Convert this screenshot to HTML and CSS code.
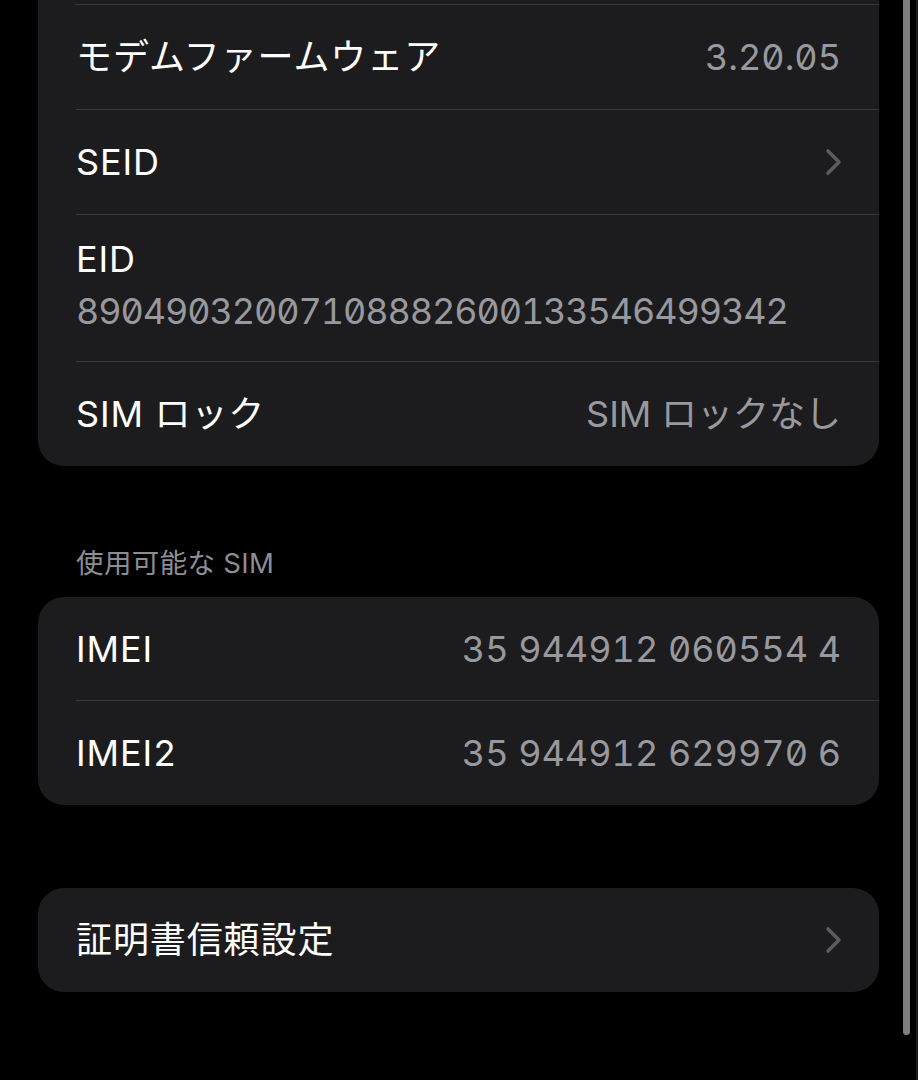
FILE: index.html
```html
<!DOCTYPE html>
<html lang="ja">
<head>
<meta charset="utf-8">
<link rel="stylesheet" href="styles.css">
</head>
<body>
<div class="screen">
  <div class="list">
    <div class="card card-top">
      <div class="stub"></div>
      <div class="row">
        <span class="label">モデムファームウェア</span>
        <span class="value">3.20.05</span>
      </div>
      <div class="row">
        <span class="label">SEID</span>
        <svg class="chev" viewBox="0 0 18 28" width="18" height="28"><path d="M3 3 L14 14 L3 25" fill="none" stroke="#5b5b60" stroke-width="3.6" stroke-linecap="round" stroke-linejoin="round"/></svg>
      </div>
      <div class="row row-tall">
        <span class="label">EID</span>
        <span class="value num eid">89049032007108882600133546499342</span>
      </div>
      <div class="row row-last">
        <span class="label">SIM ロック</span>
        <span class="value">SIM ロックなし</span>
      </div>
    </div>

    <div class="section-head">使用可能な SIM</div>
    <div class="card">
      <div class="row row-a">
        <span class="label">IMEI</span>
        <span class="value num">35 944912 060554 4</span>
      </div>
      <div class="row row-last">
        <span class="label">IMEI2</span>
        <span class="value num">35 944912 629970 6</span>
      </div>
    </div>

    <div class="card card-cert">
      <div class="row row-last">
        <span class="label">証明書信頼設定</span>
        <svg class="chev" viewBox="0 0 18 28" width="18" height="28"><path d="M3 3 L14 14 L3 25" fill="none" stroke="#5b5b60" stroke-width="3.6" stroke-linecap="round" stroke-linejoin="round"/></svg>
      </div>
    </div>
  </div>
  <div class="scrollbar"></div>
  <div class="edge"></div>
</div>
</body>
</html>
```

FILE: styles.css
```css
* { box-sizing: border-box; }
html, body {
  margin: 0;
  padding: 0;
  background: #000;
}
body {
  font-family: Inter, "Noto Sans CJK JP", sans-serif;
  color: #fff;
  font-feature-settings: "zero" 1, "tnum" 1;
}
.screen {
  position: relative;
  width: 918px;
  height: 1080px;
  overflow: hidden;
}
.list {
  padding: 0 39px 0 38px;
  display: flex;
  flex-direction: column;
}
.card {
  background: #1c1c1e;
  border-radius: 26px;
  overflow: hidden;
  display: flex;
  flex-direction: column;
}
.card-top {
  border-top-left-radius: 0;
  border-top-right-radius: 0;
}
.stub {
  height: 5px;
  margin-left: 37px;
  border-bottom: 1px solid #38383a;
}
.row {
  height: 105px;
  margin-left: 38px;
  padding-right: 38px;
  border-bottom: 1.5px solid #38383a;
  display: flex;
  align-items: center;
  justify-content: space-between;
}
.row-a { height: 104px; }
.row-last {
  border-bottom: none;
  height: 104px;
}
.row-tall {
  height: 147px;
  flex-direction: column;
  align-items: flex-start;
  justify-content: center;
  gap: 6px;
  padding-bottom: 6px;
}
.label {
  font-size: 36px;
  line-height: 46px;
  letter-spacing: 0.9px;
}
.value {
  font-size: 36px;
  line-height: 46px;
  color: #98989f;
}
.num {
  letter-spacing: 0;
}
.eid {
  letter-spacing: -1.1px;
}
.chev {
  display: block;
  margin-right: -2px;
}
.section-head {
  margin-top: 77px;
  height: 54px;
  padding-left: 38px;
  font-size: 27.5px;
  line-height: 40px;
  letter-spacing: 0.4px;
  color: #8d8d93;
}
.card-cert {
  margin-top: 83px;
}
.scrollbar {
  position: absolute;
  left: 903px;
  top: -10px;
  width: 7px;
  height: 1045px;
  border-radius: 4px;
  background: #7f7f82;
}
.edge {
  position: absolute;
  left: 916px;
  top: 0;
  width: 2px;
  height: 1080px;
  background: #1a1a1a;
}
```
